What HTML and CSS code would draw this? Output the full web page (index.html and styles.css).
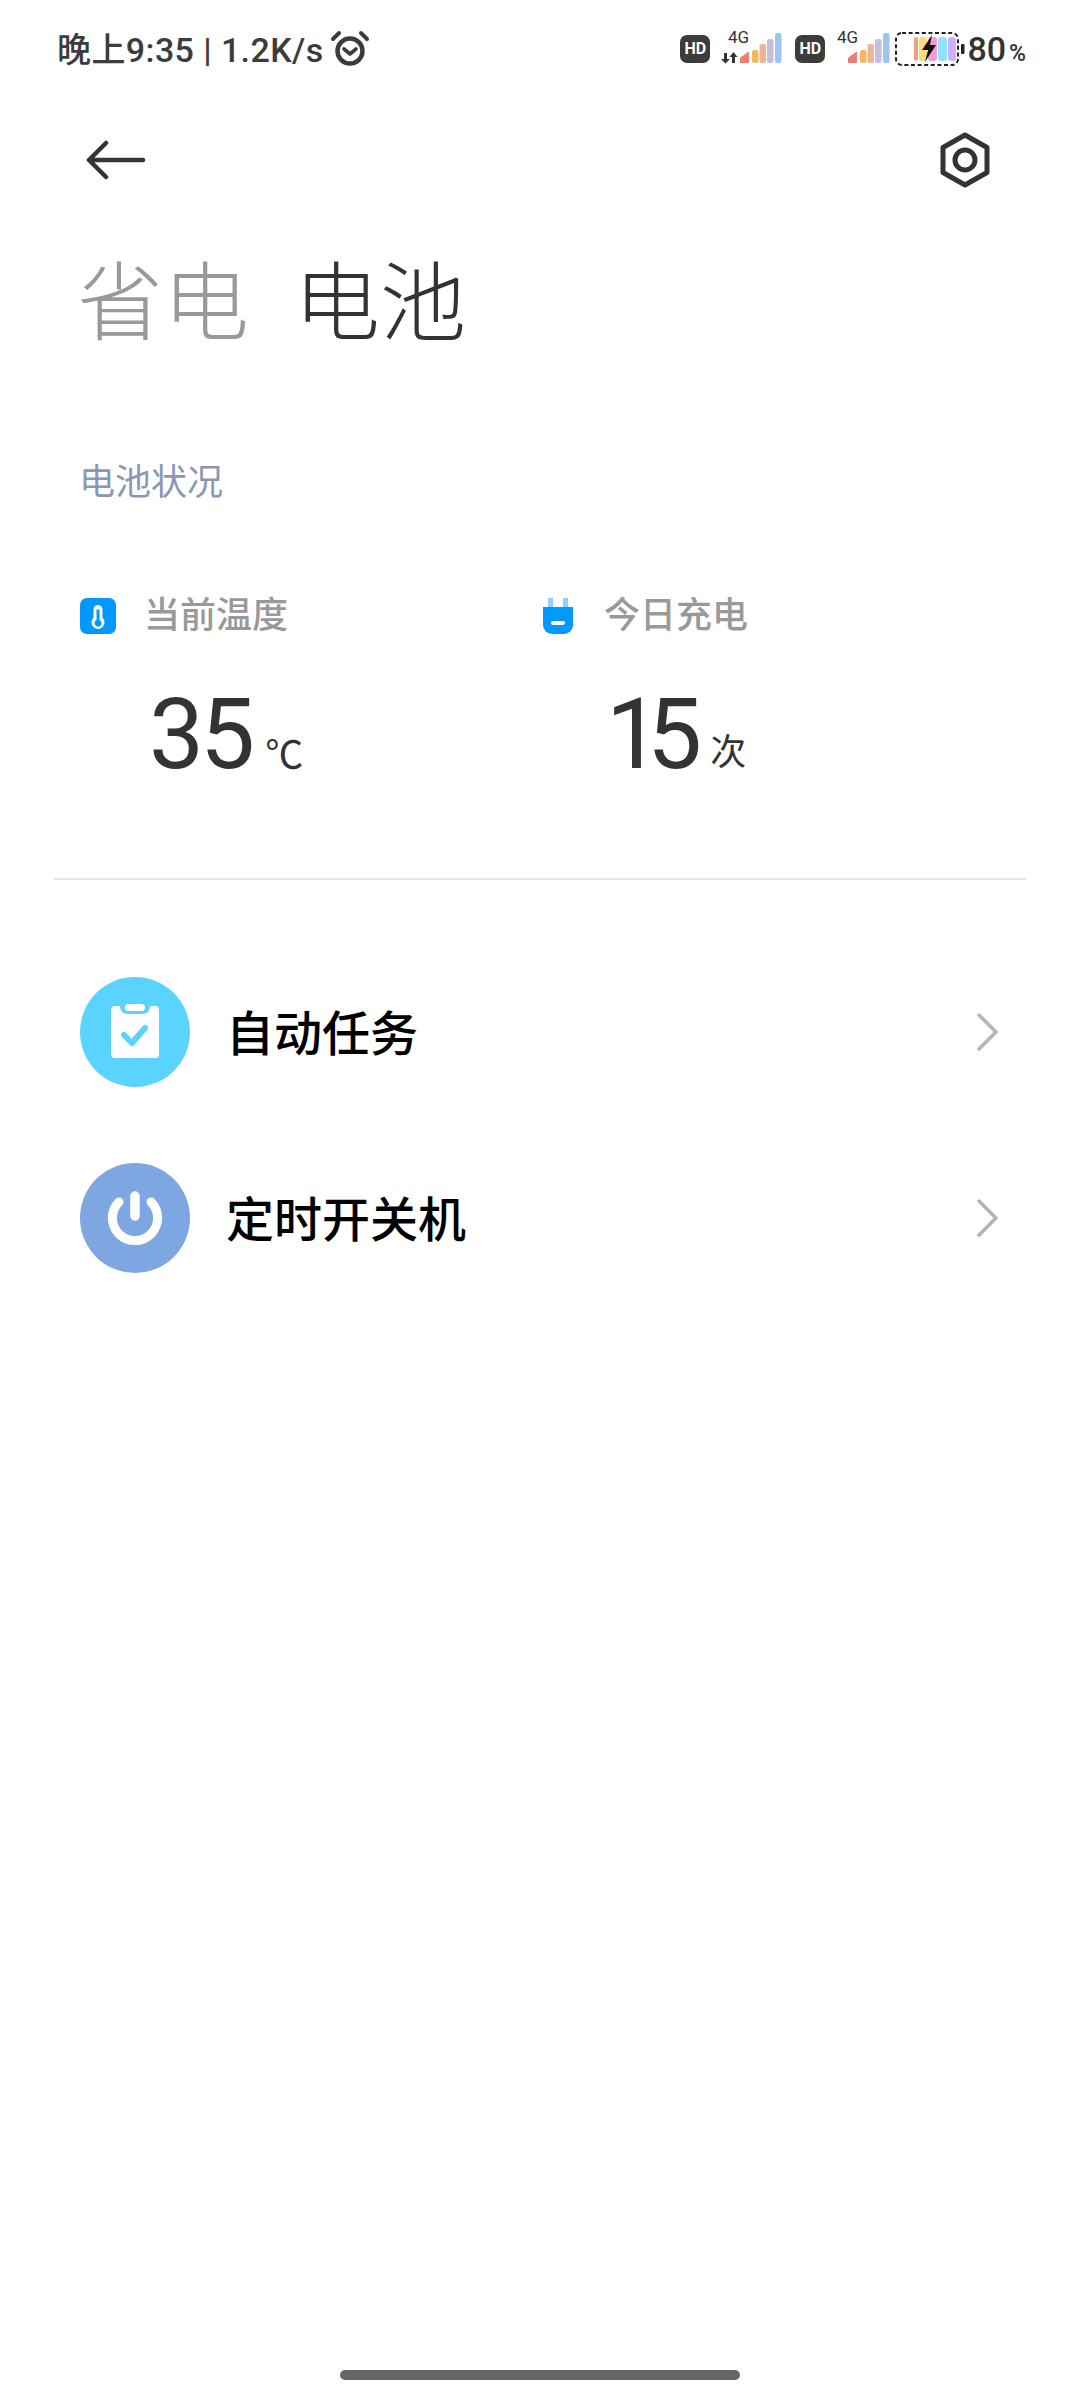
FILE: index.html
```html
<!DOCTYPE html>
<html lang="zh-CN">

<head>
    <meta charset="UTF-8">
    <meta name="viewport" content="width=device-width, initial-scale=1.0">
    <title>电池</title>
    <link rel="stylesheet" href="styles.css">
</head>

<body>
    <div class="status-bar">
        <div class="status-left">
            <span class="status-time">晚上9:35 | 1.2K/s</span>
            <svg class="alarm" width="40" height="38" viewBox="0 0 40 38" fill="none" stroke="#3c3c3c" stroke-linecap="round">
                <circle cx="20" cy="21" r="12.500" stroke-width="4.500"/>
                <path d="M14 19l6 5 6-5" stroke-width="3.600" stroke-linejoin="round"/>
                <path d="M3 9l6-6M37 9l-6-6" stroke-width="4"/>
            </svg>
        </div>
        <div class="status-right">
            <span class="hd">HD</span>
            <svg class="signal" width="64" height="46" viewBox="0 -4 64 46">
                <text x="8" y="13" class="net">4G</text>
                <path d="M4 23h3v6h3l-4.500 4.500L1 29h3z" fill="#333"/>
                <path d="M12 33v-6H9.500l4-5 4 5H15v6z" fill="#333"/>
                <path d="M20 33v-4q0-1 1-2l7-5q1-.5 1 .5V33z" fill="#ef7b76"/>
                <rect x="32" y="20" width="6.500" height="13" rx="2" fill="#f4b860"/>
                <rect x="39.500" y="14" width="6.500" height="19" rx="2" fill="#eab59a"/>
                <rect x="47" y="9" width="6.500" height="24" rx="2" fill="#c3bfdc"/>
                <rect x="55" y="3" width="6.500" height="30" rx="2" fill="#9cc6f2"/>
            </svg>
            <span class="hd">HD</span>
            <svg class="signal" width="56" height="46" viewBox="0 -4 56 46">
                <text x="2" y="13" class="net">4G</text>
                <path d="M13 33v-4q0-1 1-2l7-5q1-.5 1 .5V33z" fill="#ef7b76"/>
                <rect x="25" y="20" width="6.500" height="13" rx="2" fill="#f4b860"/>
                <rect x="32.500" y="14" width="6.500" height="19" rx="2" fill="#eab59a"/>
                <rect x="40" y="9" width="6.500" height="24" rx="2" fill="#c3bfdc"/>
                <rect x="48" y="3" width="6.500" height="30" rx="2" fill="#9cc6f2"/>
            </svg>
            <svg class="battery" width="72" height="36" viewBox="0 0 72 36">
                <rect x="2" y="2" width="62" height="32" rx="6" fill="none" stroke="#222" stroke-width="2" stroke-dasharray="4 2.600"/>
                <rect x="20" y="6" width="4" height="24" rx="2" fill="#f3a07f"/>
                <rect x="25" y="6" width="8" height="24" rx="3" fill="#fbdc7a"/>
                <rect x="34" y="6" width="9" height="24" rx="3" fill="#f59ad0"/>
                <rect x="44" y="6" width="9" height="24" rx="3" fill="#92e2fb"/>
                <rect x="54" y="6" width="8" height="24" rx="3" fill="#cdb0f5"/>
                <path d="M38 4L28 19h6l-3 12 11-17h-6z" fill="#111"/>
                <rect x="67" y="13" width="3.500" height="10" rx="1" fill="#222"/>
            </svg>
            <span class="battery-level">80<small>%</small></span>
        </div>
    </div>

    <div class="toolbar">
        <svg width="60" height="44" viewBox="0 0 60 44" fill="none" stroke="#333" stroke-width="4.500" stroke-linecap="round" stroke-linejoin="round">
            <path d="M57 22H3M20 5L3 22l17 17"/>
        </svg>
        <svg width="52" height="56" viewBox="0 0 52 56" fill="none" stroke="#333" stroke-width="5" stroke-linejoin="round">
            <path d="M26 3l22 12.500v25L26 53 4 40.500v-25z"/>
            <circle cx="26" cy="28" r="10"/>
        </svg>
    </div>

    <div class="tabs">
        <span class="tab">省电</span>
        <span class="tab active">电池</span>
    </div>

    <div class="section-title">电池状况</div>

    <div class="stats">
        <div class="stat">
            <div class="stat-label">
                <svg class="stat-icon" width="36" height="36" viewBox="0 0 36 36">
                    <rect width="36" height="36" rx="7" fill="#0099ff"/>
                    <path d="M18 7a4.500 4.500 0 0 0-4.500 4.500v8.200a6.500 6.500 0 1 0 9 0v-8.200A4.500 4.500 0 0 0 18 7z" fill="#fff"/>
                    <path d="M16.500 11.500h3v10.500a3.500 3.500 0 1 1-3 0z" fill="#0099ff"/>
                </svg>
                <span>当前温度</span>
            </div>
            <div class="stat-value">35<span class="unit unit-temp">℃</span></div>
        </div>
        <div class="stat">
            <div class="stat-label">
                <svg class="stat-icon" width="36" height="36" viewBox="0 0 36 36">
                    <rect x="8" y="0" width="5" height="10" fill="#8fd0ff"/>
                    <rect x="23" y="0" width="5" height="10" fill="#8fd0ff"/>
                    <path d="M3 9h30v18a9 9 0 0 1-9 9H12a9 9 0 0 1-9-9z" fill="#0099ff"/>
                    <rect x="11" y="23" width="14" height="4" rx="2" fill="#fff"/>
                </svg>
                <span>今日充电</span>
            </div>
            <div class="stat-value count">15<span class="unit">次</span></div>
        </div>
    </div>

    <div class="divider"></div>

    <div class="menu">
        <div class="menu-row">
            <span class="menu-icon task">
                <svg width="110" height="110" viewBox="0 0 110 110">
                    <path d="M35 29h5c0 5 3 8 8 8h14c5 0 8-3 8-8h5a4 4 0 0 1 4 4v44a4 4 0 0 1-4 4H35a4 4 0 0 1-4-4V33a4 4 0 0 1 4-4z" fill="#fff"/>
                    <rect x="45" y="27" width="20" height="7" rx="3.500" fill="#fff"/>
                    <path d="M44 58l8 8 13-15" fill="none" stroke="#5ad4ff" stroke-width="6" stroke-linecap="round" stroke-linejoin="round"/>
                </svg>
            </span>
            <span class="menu-text">自动任务</span>
            <svg class="chevron" width="24" height="40" viewBox="0 0 24 40" fill="none" stroke="#b3b3b3" stroke-width="3.500" stroke-linecap="round" stroke-linejoin="round">
                <path d="M5 3l17 17L5 37"/>
            </svg>
        </div>
        <div class="menu-row">
            <span class="menu-icon power">
                <svg width="110" height="110" viewBox="0 0 110 110" fill="none" stroke="#fff" stroke-linecap="round">
                    <path d="M39 39a22.600 22.600 0 1 0 32 0" stroke-width="9"/>
                    <path d="M55 33v20" stroke-width="9.500"/>
                </svg>
            </span>
            <span class="menu-text">定时开关机</span>
            <svg class="chevron" width="24" height="40" viewBox="0 0 24 40" fill="none" stroke="#b3b3b3" stroke-width="3.500" stroke-linecap="round" stroke-linejoin="round">
                <path d="M5 3l17 17L5 37"/>
            </svg>
        </div>
    </div>

    <div class="home-indicator"></div>
</body>

</html>
```

FILE: styles.css
```css
body {
    font-family: 'Roboto', 'Noto Sans CJK SC', sans-serif;
    margin: 0;
    padding: 0;
    width: 1080px;
    height: 2400px;
    background: #ffffff;
    color: #333333;
    position: relative;
    overflow: hidden;
}

.status-bar {
    display: flex;
    justify-content: space-between;
    align-items: center;
    height: 48px;
    padding: 25px 54px 0 57px;
}

.status-left,
.status-right {
    display: flex;
    align-items: center;
}

.status-time {
    font-size: 34px;
    font-weight: 500;
    letter-spacing: 0.4px;
    color: #3c3c3c;
    padding-bottom: 3px;
}

.alarm {
    margin-left: 6px;
}

.hd {
    display: block;
    width: 30px;
    height: 28px;
    line-height: 28px;
    border-radius: 7px;
    background: #3c3c3c;
    color: #ffffff;
    font-size: 16px;
    font-weight: 700;
    text-align: center;
}

.signal {
    display: block;
    margin-left: 10px;
}

.signal + .hd {
    margin-left: 11px;
}

.net {
    font-family: 'Roboto', sans-serif;
    font-size: 17px;
    fill: #333333;
}

.battery {
    margin-left: 3px;
}

.battery-level {
    font-size: 34px;
    font-weight: 500;
    color: #333333;
    margin-left: 1px;
}

.battery-level small {
    font-size: 23px;
    margin-left: 3px;
}

.toolbar {
    display: flex;
    justify-content: space-between;
    align-items: center;
    height: 56px;
    padding: 59px 89px 0 86px;
}

.tabs {
    display: flex;
    gap: 45px;
    padding: 63px 0 0 77px;
    font-size: 86px;
    line-height: 108px;
    font-weight: 300;
}

.tab {
    color: #999999;
}

.tab.active {
    color: #333333;
}

.section-title {
    margin: 101px 0 0 79px;
    font-size: 36px;
    line-height: 46px;
    color: #8c97b5;
}

.stats {
    display: flex;
    margin-top: 88px;
    padding-left: 80px;
}

.stat {
    width: 460px;
}

.stat-label {
    display: flex;
    align-items: center;
    gap: 28px;
    font-size: 36px;
    font-weight: 500;
    line-height: 44px;
    color: #999999;
}

.stat-value {
    margin: 41px 0 0 69px;
    font-size: 98px;
    line-height: 112px;
    letter-spacing: -4px;
    color: #333333;
}

.stat-value.count {
    margin-left: 66px;
    letter-spacing: -14px;
}

.unit {
    font-size: 36px;
    letter-spacing: 0;
    margin-left: 14px;
}

.count .unit {
    margin-left: 22px;
    vertical-align: 3px;
}

.unit-temp {
    font-size: 38px;
}

.divider {
    height: 2px;
    margin: 67px 54px 0;
    background: #e5e5e5;
}

.menu {
    display: flex;
    flex-direction: column;
    gap: 76px;
    padding: 97px 82px 0 80px;
}

.menu-row {
    display: flex;
    align-items: center;
    height: 110px;
}

.menu-icon {
    display: block;
    width: 110px;
    height: 110px;
    border-radius: 50%;
}

.menu-icon svg {
    display: block;
}

.menu-icon.task {
    background: #5ad4ff;
}

.menu-icon.power {
    background: #7ea6e0;
}

.menu-text {
    flex: 1;
    margin-left: 36px;
    padding-bottom: 5px;
    font-size: 48px;
    font-weight: 500;
    color: #000000;
}

.home-indicator {
    position: absolute;
    left: 340px;
    bottom: 20px;
    width: 400px;
    height: 10px;
    border-radius: 5px;
    background: #666666;
}
```
